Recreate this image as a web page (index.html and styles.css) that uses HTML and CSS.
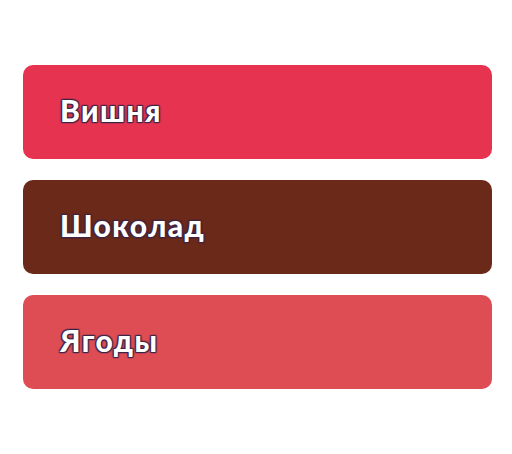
FILE: index.html
```html
<!DOCTYPE html>
<html lang="ru">
<head>
    <meta charset="UTF-8">
    <title>flavours</title>
    <link rel="stylesheet" href="styles.css">
</head>
<body>
<div class="list">
    <div class="item cherry">Вишня</div>
    <div class="item chocolate">Шоколад</div>
    <div class="item berries">Ягоды</div>
</div>
</body>
</html>
```

FILE: styles.css
```css
body {
    margin: 0;
    background: #fff;
    font-family: "Lato", "Noto Sans", sans-serif;
}

.list {
    display: flex;
    flex-direction: column;
    gap: 21px;
    padding: 65px 20px 0 23px;
}

.item {
    display: flex;
    align-items: center;
    box-sizing: border-box;
    height: 94px;
    padding: 0 0 4px 37px;
    border-radius: 10px;
    color: #fff;
    font-size: 30px;
    font-weight: 900;
    letter-spacing: 1.4px;
    text-shadow: -1px -1px 1px #3b2448, 1px -1px 1px #3b2448, -1px 1px 1px #3b2448, 1px 1px 1px #3b2448, 0 0 2px #3b2448;
}

.cherry {
    background: #e63450;
}

.chocolate {
    background: #6a2919;
}

.berries {
    background: #dd4d53;
}
```
